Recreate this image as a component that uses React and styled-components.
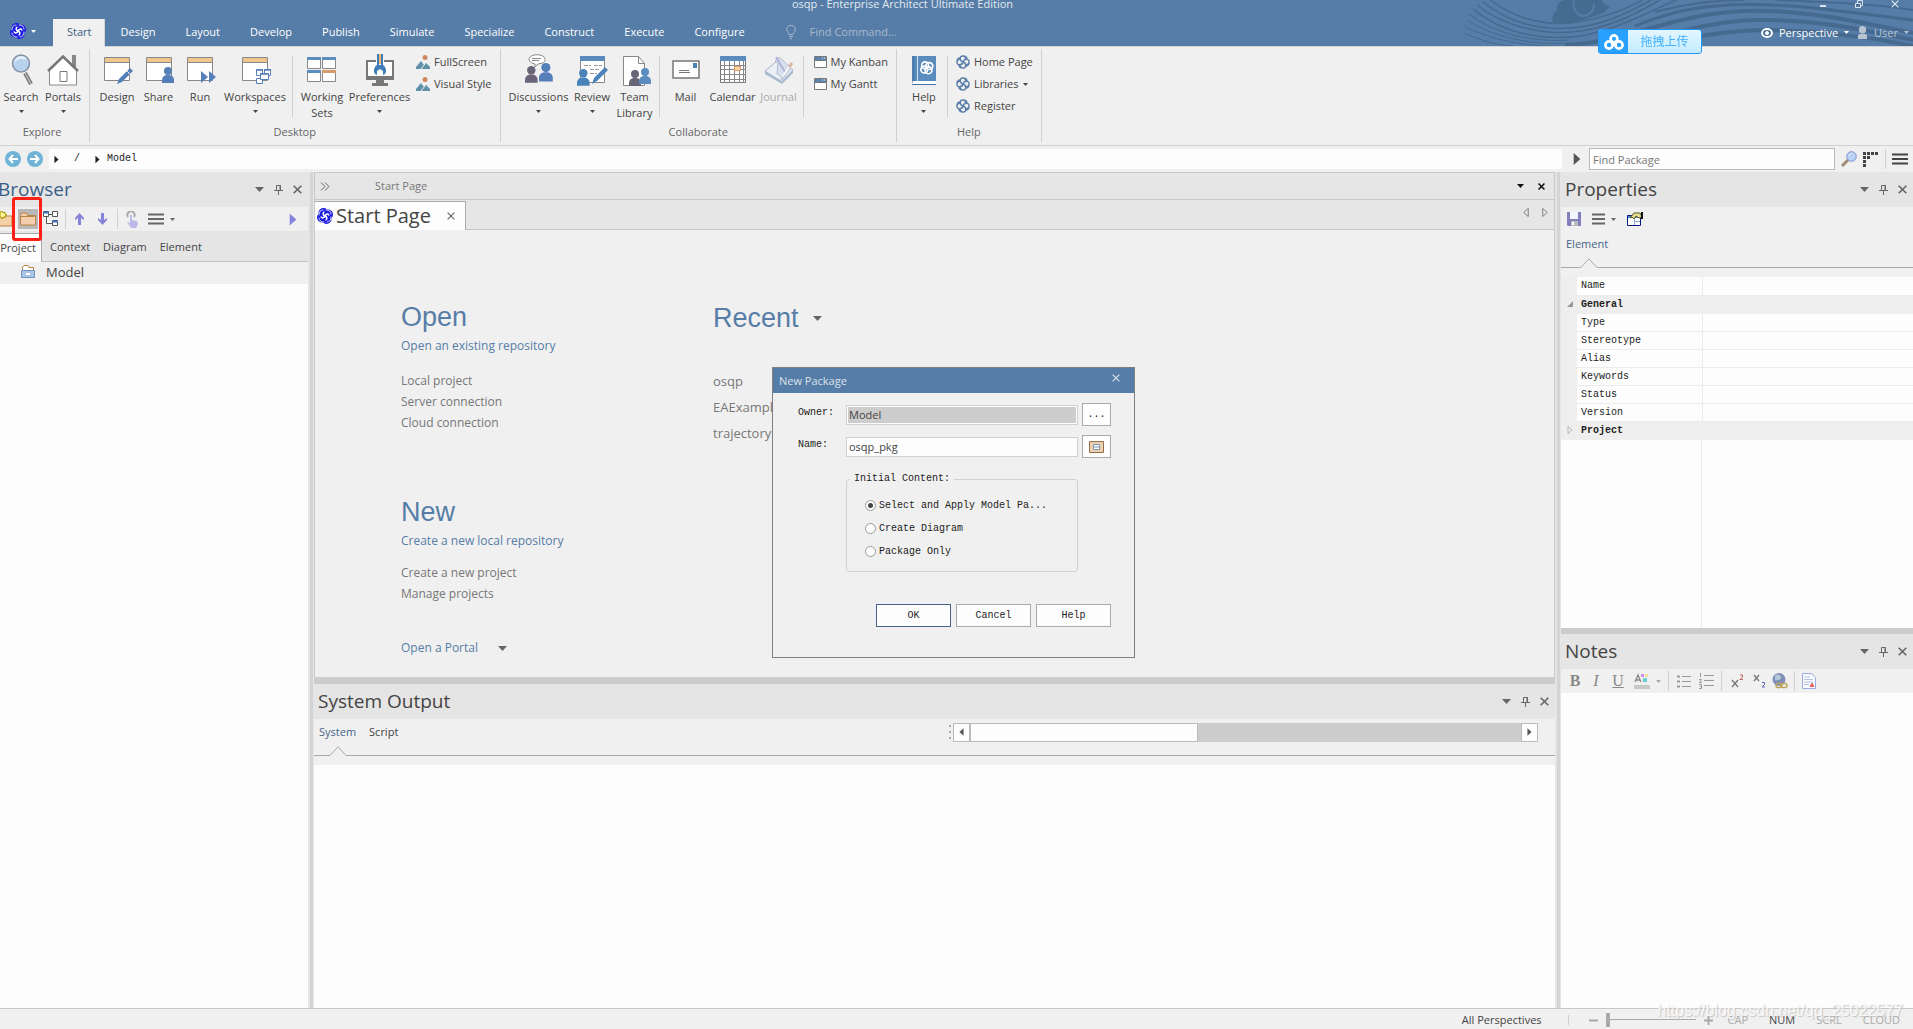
import React, { useState } from 'react';
import styled, { createGlobalStyle, css } from 'styled-components';

const UI = '"Open Sans", "Noto Sans CJK SC", sans-serif';
const MONO = '"Liberation Mono", "Noto Sans CJK SC", monospace';
const BLUE = '#567da7';

const GlobalStyle = createGlobalStyle`
    * { box-sizing: border-box; }
    body {
        margin: 0;
        font: 11px/16px ${UI};
        color: #444;
        background: #e5e5e5;
        overflow: hidden;
    }
    button, input { font: inherit; color: inherit; }
    button { background: none; border: 0; padding: 0; margin: 0; }
    a { color: inherit; text-decoration: none; }
    svg { display: block; flex: none; }
`;

/* ---------- icons ---------- */

const Caret = ({ color = '#444', size = 5 }) => (
    <svg width={size * 2 - 1} height={size} viewBox="0 0 9 5" aria-hidden="true"><path d="M0 0h9L4.5 5z" fill={color} /></svg>
);

const Arrow = ({ color = '#222', left, w = 5, h = 9, outline }) => (
    <svg width={w} height={h} viewBox="0 0 6 10" aria-hidden="true">
        <path d={left ? 'M5.500 .5v9L.5 5z' : 'M.5 .5v9L5.500 5z'} fill={outline ? 'none' : color} stroke={color} strokeWidth={outline ? 1 : 0} />
    </svg>
);

const Cross = ({ color = '#666', size = 9, w = 1.6 }) => (
    <svg width={size} height={size} viewBox="0 0 9 9" aria-hidden="true"><path d="M.7.7l7.600 7.600M8.300.7L.7 8.300" stroke={color} strokeWidth={w} /></svg>
);

const Pin = () => (
    <svg width="9" height="11" viewBox="0 0 9 11" fill="none" stroke="#666" aria-hidden="true">
        <path d="M2.500 6V1.500h4V6M0 6.500h9M4.500 7v4" /><path d="M6 1v5" />
    </svg>
);

const Menu = ({ w = 16, color = '#666' }) => (
    <svg width={w} height="12" viewBox="0 0 16 12" preserveAspectRatio="none" aria-hidden="true"><path d="M0 1.500h16M0 6h16M0 10.500h16" stroke={color} strokeWidth="2" /></svg>
);

const Knot = ({ size = 14, color = '#5d80aa' }) => (
    <svg width={size} height={size} viewBox="0 0 16 16" fill="none" stroke={color} strokeWidth="1.700" aria-hidden="true">
        <path d="M8 8C4 7 3.800 1.200 7.500 1.100 10 1 11.300 2.700 11 4.300M8 8c1-4 6.800-4.200 6.900-.5.1 2.500-1.600 3.800-3.200 3.500M8 8c4 1 4.200 6.800.5 6.900C6 15 4.700 13.300 5 11.700M8 8c-1 4-6.800 4.200-6.900.5C1 6 2.700 4.700 4.300 5" />
        <path d="M4.500 3.500C3 3.500 1.500 5 1.300 7M12.500 4.500C12.500 3 11 1.500 9 1.300M11.500 12.500c1.500 0 3-1.500 3.200-3.500M3.500 11.500c0 1.500 1.500 3 3.500 3.200" />
    </svg>
);

const KnotSolid = ({ size = 16 }) => (
    <svg width={size} height={size} viewBox="0 0 16 16" aria-hidden="true">
        <g fill="#1a1ae0"><circle cx="6.500" cy="5" r="5" /><circle cx="11" cy="6.500" r="5" /><circle cx="9.500" cy="11" r="5" /><circle cx="5" cy="9.500" r="5" /></g>
        <g fill="none" stroke="#fff" strokeLinecap="round">
            <path d="M8 8C6 7.500 5.500 5 7 4.200M8 8c.5-2 3-2.500 3.800-1M8 8c2 .5 2.500 3 1 3.800M8 8c-.5 2-3 2.500-3.800 1" strokeWidth="1.500" />
            <path d="M2 7c-.3-3 1.500-5 4-5M9 2c3-.3 5 1.500 5 4M14 9c.3 3-1.500 5-4 5M7 14c-3 .3-5-1.500-5-4" strokeWidth=".8" />
        </g>
    </svg>
);

const Win = ({ children }) => (
    <g>
        <path d="M3.500 3.500h25v23h-25z" fill="#fff" stroke="#888" />
        <path d="M4 4h24v4H4z" fill="#efc78d" /><path d="M4 8.500h24" stroke="#888" />
        {children}
    </g>
);

const Person = ({ x, y, color, s = 1 }) => (
    <g transform={`translate(${x} ${y}) scale(${s})`} fill={color}>
        <circle cx="6" cy="4" r="4" /><path d="M0 16v-3c0-3 2-4.500 4.500-5h3c2.500.5 4.500 2 4.500 5v3z" />
    </g>
);

const bigIcons = {
    search: (
        <>
            <path d="M20 19l6 11" stroke="#777" strokeWidth="4" /><path d="M20 19l6 11" stroke="#bbb" strokeWidth="1.500" />
            <circle cx="16" cy="9.500" r="8.500" fill="#b7d0ec" stroke="#8592a3" strokeWidth="1.500" />
            <path d="M9.500 11c1-6 7-7 12.500-5-1-3-4-4-6-4-4 0-7 4-6.500 9z" fill="#e4effb" />
        </>
    ),
    portals: (
        <>
            <path d="M25 1h4v14l-4-4z" fill="#888" />
            <path d="M2.500 16.500L16 3l13.500 13.500V31h-27z" fill="#fff" stroke="#888" />
            <path d="M1 17L16 2.500 31 17" fill="none" stroke="#777" strokeWidth="2.500" />
            <path d="M13 17.500h7v10h-7z" fill="#fff" stroke="#777" />
        </>
    ),
    design: <Win><path d="M29 14l3 3-11 11-5 2 2-5z" fill="#557fb9" /><path d="M26 17l3 3" stroke="#fff" /></Win>,
    share: <Win><Person x={19} y={13} color="#557fb9" /></Win>,
    run: <Win><path d="M17 17v12l7-6zM25 17v12l7-6z" fill="#557fb9" /></Win>,
    workspaces: (
        <Win>
            <g fill="#fff" stroke="#557fb9"><path d="M17.500 15.500h6v6h-6zM25.500 15.500h6v6h-6zM17.500 24.500h6v5h-6z" /><path d="M21.500 19.500h8v6h-8z" /></g>
            <path d="M17 16h7M25 16h7M21 20h9" stroke="#557fb9" strokeWidth="1.500" />
        </Win>
    ),
    sets: (
        <>
            <g fill="#fff" stroke="#888"><path d="M1.500 3.500h13v11h-13zM16.500 3.500h13v11h-13zM1.500 16.500h13v11h-13zM16.500 16.500h13v11h-13z" /></g>
            <path d="M1 4.500h14M16 4.500h14M1 17.500h14" stroke="#5a8cbd" strokeWidth="3" /><path d="M16 17.500h14" stroke="#d59a6b" strokeWidth="3" />
        </>
    ),
    preferences: (
        <>
            <path d="M3 7h26v17H3z" fill="#fff" stroke="#777" strokeWidth="2" /><path d="M2 22h28v4H2z" fill="#777" />
            <path d="M12 26h8v3h4v3H8v-3h4z" fill="#777" />
            <path d="M12 6h8v6H12z" fill="#fff" /><path d="M13 0h2v12h-2zM17 0h2v12h-2z" fill="#3f7cb8" /><path d="M15 0h2v10h-2z" fill="#efb66c" />
            <path d="M13 11h6c3 2 4 6 2 9l-2 1v-4l-3-2-3 2v4l-2-1c-2-3-1-7 2-9z" fill="#3f7cb8" />
        </>
    ),
    discussions: (
        <>
            <path d="M7 3c3-3 11-3 14 0 2 2 1 5-1 6l-5 1-3 3v-3C6 9 5 5 7 3z" fill="#fff" stroke="#888" />
            <path d="M9 4.500h9M9 6.500h7" stroke="#888" />
            <Person x={2} y={12} color="#6a6478" s={1.050} /><Person x={16} y={9} color="#557fb9" s={1.150} />
        </>
    ),
    review: (
        <>
            <path d="M4.500 2.500h24v26h-24z" fill="#fff" stroke="#888" /><path d="M4 2h25v5H4z" fill="#5a8cbd" />
            <path d="M8 11.500h7M18 11.500h8M14 15.500h10M14 19.500h7" stroke="#999" strokeDasharray="4 1" />
            <path d="M29 13l3 3-11 11-5 3 2-6z" fill="#4a82ba" />
            <Person x={1} y={15} color="#4a82ba" s={1.050} />
        </>
    ),
    team: (
        <>
            <path d="M4.500 2.500h15l6 7v22h-21z" fill="#fff" stroke="#888" /><path d="M19.500 2.500v7h6" fill="none" stroke="#888" />
            <Person x={10} y={16} color="#6a6478" /><Person x={20} y={14} color="#5a8cbd" s={1} />
        </>
    ),
    mail: (
        <>
            <path d="M3 7h26v17H3z" fill="#fff" stroke="#777" strokeWidth="1.500" /><path d="M23 9h4v5h-4z" fill="#4a82ba" />
            <path d="M9 16.500h10M9 18.500h11" stroke="#777" />
        </>
    ),
    calendar: (
        <>
            <path d="M3.500 2.500h25v26h-25z" fill="#fff" stroke="#777" /><path d="M3 2h26v5H3z" fill="#5a8cbd" />
            <path d="M7.500 7v22M12.500 7v22M17.500 7v22M22.500 7v22M26.500 7v22M3 11.500h26M3 15.500h26M3 20.500h26M3 25.500h26" stroke="#888" />
            <path d="M17.500 12.500h6v4h-6z" fill="#fcd7a5" stroke="#e39a6b" />
        </>
    ),
    journal: (
        <g opacity=".75">
            <path d="M2 17l12-10 16 9-11 12z" fill="#e8f0f9" stroke="#8d9fb8" /><path d="M2 17v3l17 10 11-11v-3L19 27z" fill="#94a9c6" />
            <path d="M15 9l-3-2 4-4 12 11-9 12c0-3-2-5-5-6z" fill="#d0dcec" stroke="#9aaac0" /><path d="M13 3l9 15" stroke="#9aa0d0" strokeWidth="2" /><path d="M28 10l-8 12" stroke="#f7fafd" strokeWidth="2" /><path d="M29 9l-3 4" stroke="#d9a08a" strokeWidth="3" />
        </g>
    ),
    help: (
        <>
            <path d="M4 2h24v25H4z" fill="#5a8cbd" /><path d="M5.500 2v27" stroke="#4878a8" strokeWidth="2" /><path d="M9.500 2v25" stroke="#cfe0f0" />
            <path d="M5 27h23v2.500H5z" fill="#fff" /><path d="M4 30.500h24" stroke="#4878a8" />
            <g transform="translate(12 7) scale(.85)" fill="none" stroke="#fff" strokeWidth="2"><circle cx="6" cy="5" r="4" /><circle cx="11" cy="6" r="4" /><circle cx="10" cy="11" r="4" /><circle cx="5" cy="10" r="4" /></g>
        </>
    ),
};

const BigIcon = ({ name }) => <svg width="32" height="32" viewBox="0 0 32 32" aria-hidden="true">{bigIcons[name]}</svg>;

const smallIcons = {
    style: (
        <svg width="14" height="14" viewBox="0 0 14 14"><circle cx="9" cy="2.500" r="2.500" fill="#d1875f" /><path d="M0 14V12l5-6 3 4 2-2 4 4v2z" fill="#6191a8" /><path d="M5 14l4-5" stroke="#f0f0f0" /></svg>
    ),
    window: (
        <svg width="13" height="12" viewBox="0 0 13 12"><path d="M.5.5h12v11H.5z" fill="#fff" stroke="#777" /><path d="M1 1h11v3H1z" fill="#5a83ad" /><path d="M8 2h1M10 2h1" stroke="#fff" /><path d="M1 4.500h11" stroke="#777" /></svg>
    ),
    knot: <Knot size={14} />,
};

const Swirl = () => (
    <svg width="448" height="46" viewBox="0 0 448 46" fill="none" stroke="#45698f" aria-hidden="true">
        <g strokeWidth="1.500">
            <path d="M25 0c30 22 60 25 80 23s50-10 72-23" /><path d="M18 2c30 24 62 28 88 26 30-2 55-14 80-28" />
            <path d="M12 5c30 24 68 29 95 27 35-3 62-17 88-32" /><path d="M8 9c32 26 70 30 98 28 38-3 75-24 105-37" />
            <path d="M4 14c32 24 72 28 100 26M2 20c34 22 76 25 104 23M0 27c30 14 60 19 90 19M0 33c16 8 32 12 48 13" strokeWidth="1" />
        </g>
        <g strokeWidth="4">
            <path d="M100 45c60-2 110-32 180-34 60-2 120 12 168 22" /><path d="M150 46c50-8 90-25 140-26 60-1 110 10 158 20" />
            <path d="M190 45c40-9 70-14 110-15 50 0 100 6 148 16" /><path d="M170 26c30-12 50-17 80-20 70-6 140 8 198 14" strokeWidth="3" />
            <path d="M190 12c30-8 60-12 90-12M310 0c50 2 100 4 138 10" strokeWidth="2" />
        </g>
        <path d="M88 22c-1-6 0-10 4-11-1-6 2-10 7-11h38c1 6 6 5 8 7l-7 6-20 7-16 3z" fill="#45698f" stroke="none" opacity=".9" />
        <path d="M109 0c-2 8 2 14 8 16 8 0 12-6 12-12" stroke="#567da7" strokeWidth="2" />
    </svg>
);

/* ---------- shell ---------- */

const Shell = styled.div`
    display: flex;
    flex-direction: column;
    height: 100vh;
`;

const Header = styled.header`
    position: relative;
    background: ${BLUE};
    color: #fff;
    flex: none;
`;

const Decoration = styled.div`
    position: absolute;
    top: 0;
    right: 0;
`;

const TitleRow = styled.div`
    position: relative;
    display: flex;
    height: 19px;
`;

const WindowTitle = styled.div`
    flex: 1;
    text-align: center;
    line-height: 8px;
    color: #e3eaf1;
`;

const WindowButton = styled.button`
    width: 36px;
    height: 8px;
    display: grid;
    place-items: center;
`;

const TabRow = styled.nav`
    position: relative;
    display: flex;
    align-items: stretch;
    height: 28px;
    border-bottom: 1px solid #d4d4d4;
`;

const AppMenu = styled.button`
    display: flex;
    align-items: center;
    gap: 5px;
    width: 53px;
    padding-left: 10px;
    padding-bottom: 3px;
`;

const RibbonTab = styled.button`
    padding: 0 15px 2px;
    ${p => p.$active && css`
        padding: 0 13px 3px 14px;
        background: #f0f0f0;
        color: #3f5f86;
        margin-bottom: -1px;
        border-right: 1px solid #d4d4d4;
    `}
`;

const FindCommand = styled.label`
    display: flex;
    align-items: center;
    gap: 14px;
    margin-left: 26px;
    padding-bottom: 2px;
    flex: 1;
    input {
        width: 140px;
        border: 0;
        padding: 0;
        background: none;
        outline: none;
        &::placeholder { color: #a9b9ca; opacity: 1; }
    }
`;

const UserArea = styled.div`
    display: flex;
    align-items: center;
    gap: 8px;
    padding-right: 4px;
`;

const UserButton = styled.button`
    display: flex;
    align-items: center;
    gap: 6px;
    color: ${p => (p.$dim ? '#b9c4d1' : '#fff')};
`;

const Uploader = styled.button`
    position: absolute;
    z-index: 2;
    top: 29px;
    right: 211px;
    display: flex;
    width: 104px;
    height: 25px;
    border: 1px solid #2196ff;
    border-radius: 3px;
    overflow: hidden;
    background: linear-gradient(#e3f6ff, #c3ecff);
    color: #41b0ff;
    font: 12px/23px ${UI};
    span { flex: 1; }
    i { display: grid; place-items: center; width: 29px; height: 23px; background: #27a0ff; }
`;

/* ---------- ribbon ---------- */

const Ribbon = styled.div`
    display: flex;
    flex: none;
    padding-top: 2px;
    background: #f0f0f0;
    border-bottom: 1px solid #d0d0d0;
`;

const Group = styled.section`
    display: flex;
    flex-direction: column;
    height: 93px;
    margin-bottom: 3px;
    border-right: 1px solid #d0d0d0;
`;

const GroupBody = styled.div`
    display: flex;
    flex: 1;
    padding: 0 ${p => p.$end || 0}px 0 ${p => p.$start || 0}px;
`;

const GroupName = styled.div`
    text-align: center;
    color: #666;
    height: 18px;
    padding-right: ${p => p.$end || 0}px;
`;

const BigButton = styled.button`
    display: flex;
    flex-direction: column;
    align-items: center;
    width: ${p => p.$w}px;
    padding-top: 5px;
    color: ${p => (p.disabled ? '#aaa' : '#444')};
    white-space: nowrap;
    line-height: 16px;
    svg + span { margin-top: 3px; }
    span + svg { margin-top: 5px; }
`;

const Separator = styled.i`
    width: 1px;
    height: ${p => p.$h || 61}px;
    margin: ${p => p.$m || '7px 4px 0 3px'};
    background: #d0d0d0;
    flex: none;
`;

const SmallColumn = styled.div`
    padding: 2px 8px 0 ${p => p.$start || 4}px;
`;

const SmallButton = styled.button`
    display: flex;
    align-items: center;
    gap: 4px;
    height: 22px;
    white-space: nowrap;
`;

/* ---------- address bar ---------- */

const AddressBar = styled.div`
    display: flex;
    align-items: center;
    height: 26px;
    flex: none;
    padding-left: 5px;
    background: #f0f0f0;
`;

const RoundButton = styled.button`
    width: 16px;
    height: 16px;
    margin-right: 6px;
    border-radius: 50%;
    background: #6fb4d6;
    display: grid;
    place-items: center;
`;

const Crumbs = styled.div`
    display: flex;
    align-items: center;
    flex: 1;
    height: 20px;
    padding-left: 5px;
    background: #fdfdfd;
    font: 10px/20px ${MONO};
    color: #222;
    span { padding: 0 15px; }
    a { padding-left: 7px; }
`;

const PackageSearch = styled.div`
    display: flex;
    align-items: center;
    gap: 6px;
    width: 351px;
    padding: 0 5px 0 11px;
    input {
        flex: 1;
        min-width: 0;
        height: 22px;
        margin: 0 0 0 2px;
        padding: 0 3px;
        border: 1px solid #bbb;
        background: #fdfdfd;
        outline: none;
        &::placeholder { color: #777; opacity: 1; }
    }
`;

/* ---------- panels ---------- */

const Workspace = styled.main`
    display: flex;
    flex: 1;
    min-height: 0;
`;

const Splitter = styled.div`
    width: 6px;
    padding: 0 1px 0 2px;
    background: #e5e5e5;
    &::before { content: ''; display: block; height: 100%; background: #d4d4d4; }
`;

const BrowserPanel = styled.aside`
    display: flex;
    flex-direction: column;
    width: 308px;
    background: #fdfdfd;
    overflow: hidden;
`;

const CenterColumn = styled.div`
    display: grid;
    grid-template-rows: 505fr 7px 324fr;
    flex: 1;
    min-width: 0;
`;

const SideColumn = styled.aside`
    display: grid;
    grid-template-rows: 456fr 6px 374fr;
    width: 352px;
`;

const Divider = styled.div`
    background: #ccc;
`;

const Panel = styled.section`
    display: flex;
    flex-direction: column;
    min-height: 0;
    background: #fdfdfd;
    border: solid #c8c8c8;
    border-width: ${p => (p.$framed ? '1px 1px 0 1px' : 0)};
`;

const PanelHead = styled.div`
    display: flex;
    align-items: center;
    height: 35px;
    flex: none;
    padding: 0 6px 0 4px;
    background: #e5e5e5;
    h2 {
        flex: 1;
        margin: 0;
        padding-bottom: 2px;
        font: 19px/32px ${UI};
        color: #444;
    }
`;

const BrowserHead = styled(PanelHead)`
    padding-left: 0;
    h2 { margin-left: -2px; color: #3b5e88; }
`;

const HeadButton = styled.button`
    display: grid;
    place-items: center;
    width: 19px;
    height: 19px;
    &:last-child { width: 9px; margin-left: 5px; }
`;

const Toolbar = styled.div`
    position: relative;
    display: flex;
    align-items: center;
    height: 24px;
    flex: none;
    padding-left: ${p => p.$start || 0}px;
    gap: ${p => p.$gap || 0}px;
    background: #f0f0f0;
`;

const ToolButton = styled.button`
    display: flex;
    align-items: center;
    justify-content: center;
    gap: 6px;
    width: ${p => p.$w}px;
    height: 20px;
    color: #888;
    background: ${p => (p.$pressed ? '#b8b8b8' : 'none')};
`;

const LetterButton = styled(ToolButton)`
    font: ${p => (p.$bold ? 'bold ' : '')}16px/20px "Liberation Serif", serif;
    font-style: ${p => (p.$italic ? 'italic' : 'normal')};
    text-decoration: ${p => (p.$underline ? 'underline' : 'none')};
`;

const Highlight = styled.div`
    position: absolute;
    left: 12px;
    top: -10px;
    width: 30px;
    height: 44px;
    border: 3px solid #ff2015;
    border-radius: 3px;
    pointer-events: none;
`;

const Spacer = styled.span`
    flex: 1;
`;

const BrowserTabs = styled.div`
    display: flex;
    height: 31px;
    flex: none;
    padding-top: 2px;
    background: #e5e5e5;
    border-bottom: 1px solid #c4c4c4;
`;

const BrowserTab = styled.button`
    padding: 0 7px 1px 6px;
    ${p => p.$active && css`
        display: flex;
        align-items: center;
        justify-content: flex-end;
        width: 42px;
        flex: none;
        padding: 0 5px 0 0;
        margin-right: 2px;
        margin-bottom: -1px;
        background: #fdfdfd;
        border: solid #aaa;
        border-width: 1px 1px 0 0;
    `}
`;

const TreeRow = styled.div`
    display: flex;
    align-items: center;
    gap: 11px;
    height: 22px;
    padding: 0 0 2px 21px;
    background: #f0f0f0;
    font-size: 13px;
`;

const DocBar = styled.div`
    display: flex;
    align-items: center;
    flex: none;
    height: 27px;
    padding: 0 8px 0 5px;
    border-bottom: 1px solid #c8c8c8;
    background: #e6e6e6;
    color: #777;
    span { margin-left: 45px; }
    button:last-child { margin-left: 7px; }
`;

const DocTabs = styled.div`
    display: flex;
    flex: none;
    height: 30px;
    background: #e6e6e6;
    border-bottom: 1px solid #c8c8c8;
    padding: 3px 5px 0 0;
`;

const DocTab = styled.div`
    display: flex;
    align-items: center;
    width: 151px;
    margin: -2px 0 -1px;
    padding-left: 2px;
    background: #fdfdfd;
    border: solid #aaa;
    border-width: 1px 1px 0 0;
    font-size: 20px;
    line-height: 28px;
    span { flex: 1; margin-left: 3px; white-space: nowrap; }
    button { margin-right: 10px; }
`;

const StartPage = styled.div`
    display: flex;
    flex: 1;
    padding: 71px 0 0 86px;
    background: #f0f0f0;
    overflow: hidden;
`;

const StartColumn = styled.div`
    width: ${p => p.$w}px;
    padding-top: ${p => p.$top || 0}px;
`;

const StartBlock = styled.section`
    margin-bottom: ${p => p.$after}px;
`;

const StartTitle = styled.h1`
    display: flex;
    align-items: center;
    gap: 14px;
    margin: 0;
    font: 27px/32px "Liberation Sans", sans-serif;
    color: ${BLUE};
`;

const StartLink = styled.a`
    display: flex;
    align-items: center;
    gap: 20px;
    width: fit-content;
    margin: ${p => p.$m || 0};
    color: ${BLUE};
    font-size: 12px;
    line-height: 20px;
`;

const StartList = styled.ul`
    list-style: none;
    margin: ${p => p.$gap}px 0 0;
    padding: 0;
    color: #777;
    font-size: ${p => p.$size || 12}px;
    line-height: ${p => p.$line || 21}px;
`;

const PanelTabs = styled.div`
    display: flex;
    align-items: center;
    gap: 13px;
    height: 26px;
    flex: none;
    padding: 0 17px 0 5px;
    background: #f0f0f0;
`;

const PanelTab = styled.button`
    color: ${p => (p.$active ? '#46648a' : '#444')};
`;

const RuleRow = styled.div`
    display: flex;
    align-items: flex-end;
    flex: none;
    height: 20px;
    background: #f0f0f0;
    border-bottom: 9px solid #f0f0f0;
    i { height: 1px; background: #aaa; width: ${p => p.$start}px; }
    b { height: 1px; background: #aaa; flex: 1; }
`;

const TabRule = ({ start }) => (
    <RuleRow $start={start}>
        <i />
        <svg width="16" height="10" viewBox="0 0 16 10" aria-hidden="true"><path d="M0 9.500L8 .8l8 8.700" fill="none" stroke="#aaa" /></svg>
        <b />
    </RuleRow>
);

const Scroller = styled.div`
    display: flex;
    flex: 0 1 589px;
    align-items: center;
    gap: 2px;
`;

const Grip = styled.i`
    width: 2px;
    height: 14px;
    border-top: 2px solid #aaa;
    border-bottom: 2px solid #aaa;
    background: linear-gradient(transparent 4px, #aaa 4px, #aaa 6px, transparent 6px);
`;

const ScrollTrack = styled.div`
    display: flex;
    flex: 1;
    height: 19px;
    background: #cdcdcd;
`;

const ScrollButton = styled.button`
    display: grid;
    place-items: center;
    width: 17px;
    background: #fdfdfd;
    border: 1px solid #bbb;
`;

const ScrollThumb = styled.div`
    width: 39%;
    background: #fdfdfd;
    border: 1px solid #bbb;
`;

const PropertyArea = styled.div`
    flex: 1;
    background: linear-gradient(90deg, transparent 140px, #ebebeb 140px, #ebebeb 141px, transparent 141px);
`;

const PropertyTable = styled.table`
    width: 100%;
    table-layout: fixed;
    border-collapse: collapse;
    font: 10px/17px ${MONO};
    td, th { padding: 0; height: 18px; border-bottom: 1px solid #ececec; background: #fdfdfd; }
    th { text-align: left; font-weight: normal; padding-left: 4px; width: 125px; border-right: 1px solid #ebebeb; color: #222; }
    td:first-child { width: 16px; background: #eee; border-color: #eee; padding-left: 6px; }
`;

const CategoryRow = styled.tr`
    && th { font-weight: bold; background: #eee; border-color: #eee; }
    && td { background: #eee; border-color: #eee; }
`;

/* ---------- status bar ---------- */

const StatusBar = styled.footer`
    position: relative;
    display: flex;
    align-items: center;
    justify-content: flex-end;
    flex: none;
    height: 21px;
    padding: 2px 13px 0 0;
    border-top: 1px solid #c8c8c8;
    background: #f0f0f0;
`;

const ZoomControl = styled.label`
    display: flex;
    align-items: center;
    gap: 8px;
    margin: 0 14px 0 20px;
    input {
        appearance: none;
        width: 90px;
        height: 14px;
        margin: 0;
        background: linear-gradient(transparent 6px, #aaa 6px, #aaa 7px, transparent 7px);
        &::-webkit-slider-thumb { appearance: none; width: 4px; height: 14px; background: #aaa; }
    }
`;

const KeyState = styled.span`
    margin-left: ${p => p.$gap || 21}px;
    color: ${p => (p.$on ? '#444' : '#aaa')};
`;

const Watermark = styled.div`
    position: absolute;
    right: 10px;
    bottom: 9px;
    color: #fafafa;
    font: 16px/18px "Liberation Sans", sans-serif;
    text-shadow: 1px 1px 1px #bbb;
    opacity: .85;
    pointer-events: none;
`;

/* ---------- dialog ---------- */

const Overlay = styled.div`
    position: fixed;
    inset: 0;
    display: flex;
    align-items: center;
    justify-content: center;
    padding: 0 6px 4px 0;
    pointer-events: none;
`;

const Dialog = styled.form`
    width: 363px;
    padding-bottom: 30px;
    border: 1px solid #808080;
    background: #f0f0f0;
    font: 10px/12px ${MONO};
    color: #222;
    pointer-events: auto;
`;

const DialogHead = styled.div`
    display: flex;
    justify-content: space-between;
    height: 25px;
    padding: 0 14px 0 6px;
    background: ${BLUE};
    color: #dbe2ea;
    font: 11px/25px ${UI};
    button { height: 20px; }
`;

const DialogBody = styled.div`
    padding: 10px 23px 0 25px;
`;

const Field = styled.div`
    display: flex;
    align-items: center;
    height: 23px;
    margin-bottom: 9px;
    label { width: 48px; height: 15px; }
    input {
        flex: 1;
        min-width: 0;
        height: 20px;
        margin-right: 4px;
        padding: 0 2px;
        border: 1px solid #d0d0d0;
        background: #fdfdfd;
        font: 11px/16px ${UI};
        color: #444;
        outline: none;
        &:read-only { background: #cdcdcd; box-shadow: inset 0 0 0 1px #fdfdfd; }
    }
`;

const SquareButton = styled.button`
    display: grid;
    place-items: center;
    width: 29px;
    height: 23px;
    border: 1px solid #aaa;
    background: #fdfdfd;
`;

const Options = styled.fieldset`
    margin: 15px 33px 0 48px;
    padding: 9px 3px 8px;
    border: 1px solid #d0d0d0;
    border-radius: 3px;
    legend { padding: 0 4px; }
`;

const Option = styled.label`
    display: flex;
    align-items: center;
    gap: 3px;
    height: 23px;
    padding-left: 15px;
    white-space: nowrap;
    input {
        appearance: none;
        display: grid;
        place-items: center;
        width: 11px;
        height: 11px;
        margin: 0;
        border: 1px solid #999;
        border-radius: 50%;
        background: #fdfdfd;
        &:checked::before { content: ''; width: 5px; height: 5px; border-radius: 50%; background: #444; }
    }
`;

const Actions = styled.div`
    display: flex;
    justify-content: flex-end;
    gap: 5px;
    margin-top: 32px;
`;

const ActionButton = styled.button`
    width: 75px;
    height: 23px;
    border: 1px solid ${p => (p.$primary ? '#46648a' : '#aaa')};
    background: #fdfdfd;
`;

const TABS = ['Start', 'Design', 'Layout', 'Develop', 'Publish', 'Simulate', 'Specialize', 'Construct', 'Execute', 'Configure'];
const PROPERTIES = ['Type', 'Stereotype', 'Alias', 'Keywords', 'Status', 'Version'];
const CONTENT = ['Select and Apply Model Pa...', 'Create Diagram', 'Package Only'];

const Big = ({ icon, label, second, caret, w, disabled }) => (
    <BigButton $w={w} disabled={disabled}>
        <BigIcon name={icon} />
        <span>{label}{second && <><br />{second}</>}</span>
        {caret && <Caret size={3} />}
    </BigButton>
);

const Small = ({ icon, label, caret }) => (
    <SmallButton>{smallIcons[icon]}{label}{caret && <Caret size={3} />}</SmallButton>
);

const HeadButtons = () => (
    <>
        <HeadButton aria-label="Options"><Caret color="#666" /></HeadButton>
        <HeadButton aria-label="Auto hide"><Pin /></HeadButton>
        <HeadButton aria-label="Close"><Cross /></HeadButton>
    </>
);

const TopBar = ({ tab, setTab }) => (
    <Header>
        <Decoration><Swirl /></Decoration>
        <TitleRow>
            <WindowTitle>osqp - Enterprise Architect Ultimate Edition</WindowTitle>
            <WindowButton aria-label="Minimize"><svg width="6" height="6"><path d="M0 5h6" stroke="#dde4ec" strokeWidth="2" /></svg></WindowButton>
            <WindowButton aria-label="Restore"><svg width="8" height="8" fill="none" stroke="#dde4ec"><path d="M.5 3.500h5v4h-5zM2.500 3V.5h5v5H6" /></svg></WindowButton>
            <WindowButton aria-label="Close window"><Cross color="#dde4ec" size={8} w={1.300} /></WindowButton>
        </TitleRow>
        <TabRow>
            <AppMenu aria-label="Application menu"><KnotSolid /><Caret color="#fff" size={3} /></AppMenu>
            {TABS.map(t => <RibbonTab key={t} $active={t === tab} onClick={() => setTab(t)}>{t}</RibbonTab>)}
            <FindCommand>
                <svg width="10" height="14" viewBox="0 0 10 14" fill="none" stroke="#a9b9ca" aria-hidden="true"><path d="M3 9.500C3 8 .8 7 .8 4.500a4.200 4 0 018.400 0C9.200 7 7 8 7 9.500zM3 11.500h4M4 13.500h2" /></svg>
                <input aria-label="Find Command" placeholder="Find Command..." />
            </FindCommand>
            <UserArea>
                <UserButton>
                    <svg width="12" height="10" viewBox="0 0 12 10" fill="none" stroke="#fff" aria-hidden="true"><ellipse cx="6" cy="5" rx="5" ry="4" strokeWidth="1.800" /><circle cx="6" cy="5" r="1.500" fill="#fff" /></svg>
                    Perspective <Caret color="#fff" size={3} />
                </UserButton>
                <UserButton $dim>
                    <svg width="11" height="13" viewBox="0 0 12 14" fill="#b9c4d1" aria-hidden="true"><circle cx="6" cy="4" r="4" /><path d="M1 14v-4c1-2 9-2 10 0v4z" /></svg>
                    User <Caret color="#b9c4d1" size={3} />
                </UserButton>
            </UserArea>
        </TabRow>
        <Uploader>
            <i><svg width="20" height="16" viewBox="0 0 20 16" fill="none" stroke="#fff" strokeWidth="2.600" aria-hidden="true"><circle cx="10" cy="4.800" r="3.400" /><circle cx="5" cy="11" r="3.600" /><circle cx="15" cy="11" r="3.600" /><path d="M7.500 8.500l5 4" /></svg></i>
            <span>拖拽上传</span>
        </Uploader>
    </Header>
);

const RibbonBar = () => (
    <Ribbon>
        <Group>
            <GroupBody $end={5}>
                <Big icon="search" label="Search" caret w={42} />
                <Big icon="portals" label="Portals" caret w={42} />
            </GroupBody>
            <GroupName $end={5}>Explore</GroupName>
        </Group>
        <Group>
            <GroupBody $start={6}>
                <Big icon="design" label="Design" w={42} />
                <Big icon="share" label="Share" w={41} />
                <Big icon="run" label="Run" w={42} />
                <Big icon="workspaces" label="Workspaces" caret w={68} />
                <Separator />
                <Big icon="sets" label="Working" second="Sets" w={50} />
                <Big icon="preferences" label="Preferences" caret w={65} />
                <SmallColumn>
                    <Small icon="style" label="FullScreen" />
                    <Small icon="style" label="Visual Style" />
                </SmallColumn>
            </GroupBody>
            <GroupName>Desktop</GroupName>
        </Group>
        <Group>
            <GroupBody $start={6}>
                <Big icon="discussions" label="Discussions" caret w={64} />
                <Big icon="review" label="Review" caret w={43} />
                <Big icon="team" label="Team" second="Library" w={42} />
                <Separator />
                <Big icon="mail" label="Mail" w={44} />
                <Big icon="calendar" label="Calendar" w={50} />
                <Big icon="journal" label="Journal" w={42} disabled />
                <Separator />
                <SmallColumn $start={6}>
                    <Small icon="window" label="My Kanban" />
                    <Small icon="window" label="My Gantt" />
                </SmallColumn>
            </GroupBody>
            <GroupName>Collaborate</GroupName>
        </Group>
        <Group>
            <GroupBody $start={7}>
                <Big icon="help" label="Help" caret w={40} />
                <Separator />
                <SmallColumn>
                    <Small icon="knot" label="Home Page" />
                    <Small icon="knot" label="Libraries" caret />
                    <Small icon="knot" label="Register" />
                </SmallColumn>
            </GroupBody>
            <GroupName>Help</GroupName>
        </Group>
    </Ribbon>
);

const Address = () => (
    <AddressBar>
        <RoundButton aria-label="Back"><svg width="10" height="10" fill="none" stroke="#fff" strokeWidth="2"><path d="M5 1L1.500 5 5 9M2 5h8" /></svg></RoundButton>
        <RoundButton aria-label="Forward"><svg width="10" height="10" fill="none" stroke="#fff" strokeWidth="2"><path d="M5 1l3.500 4L5 9M8 5H0" /></svg></RoundButton>
        <Crumbs><Arrow /><span>/</span><Arrow /><a href="#model">Model</a></Crumbs>
        <PackageSearch>
            <Arrow color="#555" w={8} h={14} />
            <input aria-label="Find Package" placeholder="Find Package" />
            <svg width="16" height="16" viewBox="0 0 16 16" aria-hidden="true"><path d="M7 9l-6 6" stroke="#a08a78" strokeWidth="3" /><circle cx="10.500" cy="5.500" r="4.800" fill="#b9d3f7" stroke="#7d8fc9" /><path d="M8 5c1-2 3-2 4-2" stroke="#fff" /></svg>
            <svg width="16" height="16" viewBox="0 0 16 16" fill="#444" aria-hidden="true"><path d="M0 1h3v3H0zM4 1h3v3H4zM8 1h3v3H8zM12 1h3v3h-3zM0 5h3v3H0zM4 5h3v3H4zM0 9h3v3H0zM0 13h3v3H0z" /></svg>
            <Separator $h={20} $m="0" />
            <Menu color="#444" />
        </PackageSearch>
    </AddressBar>
);

const Browser = () => (
    <BrowserPanel>
        <BrowserHead><h2>Browser</h2><HeadButtons /></BrowserHead>
        <Toolbar>
            <ToolButton $w={18} aria-label="New model"><svg width="18" height="16" viewBox="0 0 18 16"><path d="M0 5h12v10H0" fill="#f5cfa6" stroke="#b98443" /><path d="M2 0l1 2 2-1 0 2 2 1-2 1 0 2-2-1-1 2-1-2-1 0V1z" fill="#fff59c" stroke="#a89700" /></svg></ToolButton>
            <ToolButton $w={20} $pressed aria-label="New package"><svg width="16" height="14" viewBox="0 0 16 14" fill="#f5cfad" stroke="#b98443"><path d="M.5 3.500l1-2.500h5l1 2.500h8v9.500H.5z" /><path d="M.5 4.500h14" /></svg></ToolButton>
            <ToolButton $w={26} aria-label="New diagram"><svg width="16" height="16" viewBox="0 0 16 16" fill="#fff" stroke="#555"><path d="M3.500 6v6.500H9M6 3.500h3" /><path d="M.5.5h5v5h-5zM9.500.5h5v5h-5zM9.500 9.500h5v5h-5z" /><path d="M0 1.500h6M9 10.500h6" stroke="#4472b8" strokeWidth="2" /></svg></ToolButton>
            <Separator $h={20} $m="0 6px 0 1px" />
            <ToolButton $w={14} aria-label="Move up"><svg width="9" height="12" fill="#8583dc"><path d="M4.500 0L9 5v2L6 5v7H3V5L0 7V5z" /></svg></ToolButton>
            <ToolButton $w={32} aria-label="Move down"><svg width="9" height="12" fill="#8583dc"><path d="M4.500 12L9 7V5L6 7V0H3v7L0 5v2z" /></svg></ToolButton>
            <Separator $h={20} $m="0 5px 0 -1px" />
            <ToolButton $w={18} aria-label="Select"><svg width="13" height="17" viewBox="0 0 13 17"><path d="M2 6a3.600 3.600 0 116 0" fill="none" stroke="#aaa" strokeWidth="2" /><path d="M4 4h2v5l5 1 1 3-2 4H5l-4-6 3 1z" fill="#bcb9e8" /></svg></ToolButton>
            <ToolButton $w={40} aria-label="Menu"><Menu /><Caret color="#666" size={3} /></ToolButton>
            <Spacer />
            <ToolButton $w={30} aria-label="Expand"><Arrow color="#8583dc" w={8} h={15} /></ToolButton>
            <Highlight />
        </Toolbar>
        <BrowserTabs>
            <BrowserTab $active>Project</BrowserTab>
            <BrowserTab>Context</BrowserTab>
            <BrowserTab>Diagram</BrowserTab>
            <BrowserTab>Element</BrowserTab>
        </BrowserTabs>
        <TreeRow>
            <svg width="14" height="16" viewBox="0 0 14 16" aria-hidden="true"><path d="M1.500 6V3.500L3 1.500h4l1 2h4.500V6" fill="#fff" stroke="#b98443" /><path d="M.5 6.500h13v7H.5z" fill="#a9c4e4" stroke="#6d96c3" /><path d="M5 10h4" stroke="#fff" strokeWidth="2" /></svg>
            Model
        </TreeRow>
    </BrowserPanel>
);

const Center = () => (
    <CenterColumn>
        <Panel $framed>
            <DocBar>
                <svg width="10" height="9" fill="none" stroke="#666" aria-hidden="true"><path d="M1 .5l4 4-4 4M5 .5l4 4-4 4" /></svg>
                <span>Start Page</span>
                <Spacer />
                <HeadButton aria-label="Documents"><Caret color="#111" size={4} /></HeadButton>
                <HeadButton aria-label="Close document"><Cross color="#111" size={7} w={2} /></HeadButton>
            </DocBar>
            <DocTabs>
                <DocTab><KnotSolid /><span>Start Page</span><button aria-label="Close tab"><Cross size={8} w={1.300} /></button></DocTab>
                <Spacer />
                <HeadButton aria-label="Scroll left"><Arrow left outline color="#777" w={6} h={9} /></HeadButton>
                <HeadButton aria-label="Scroll right"><Arrow outline color="#777" w={6} h={9} /></HeadButton>
            </DocTabs>
            <StartPage>
                <StartColumn $w={312}>
                    <StartBlock $after={63}>
                        <StartTitle>Open</StartTitle>
                        <StartLink href="#open" $m="3px 0 0">Open an existing repository</StartLink>
                        <StartList $gap={14}>
                            <li><a href="#local">Local project</a></li>
                            <li><a href="#server">Server connection</a></li>
                            <li><a href="#cloud">Cloud connection</a></li>
                        </StartList>
                    </StartBlock>
                    <StartBlock $after={34}>
                        <StartTitle>New</StartTitle>
                        <StartLink href="#new" $m="3px 0 0">Create a new local repository</StartLink>
                        <StartList $gap={11}>
                            <li><a href="#project">Create a new project</a></li>
                            <li><a href="#manage">Manage projects</a></li>
                        </StartList>
                    </StartBlock>
                    <StartLink href="#portal">Open a Portal <Caret color="#666" /></StartLink>
                </StartColumn>
                <StartColumn $w={300} $top={1}>
                    <StartTitle>Recent <Caret color="#666" /></StartTitle>
                    <StartList $gap={34} $size={13} $line={26}>
                        <li><a href="#osqp">osqp</a></li>
                        <li><a href="#example">EAExample</a></li>
                        <li><a href="#trajectory">trajectory</a></li>
                    </StartList>
                </StartColumn>
            </StartPage>
        </Panel>
        <Divider />
        <Panel>
            <PanelHead><h2>System Output</h2><HeadButtons /></PanelHead>
            <PanelTabs>
                <PanelTab $active>System</PanelTab>
                <PanelTab>Script</PanelTab>
                <Spacer />
                <Scroller>
                    <Grip />
                    <ScrollTrack>
                        <ScrollButton aria-label="Scroll output left"><Arrow left color="#555" w={5} h={10} /></ScrollButton>
                        <ScrollThumb />
                        <Spacer />
                        <ScrollButton aria-label="Scroll output right"><Arrow color="#555" w={5} h={10} /></ScrollButton>
                    </ScrollTrack>
                </Scroller>
            </PanelTabs>
            <TabRule start={16} />
        </Panel>
    </CenterColumn>
);

const Side = () => (
    <SideColumn>
        <Panel>
            <PanelHead><h2>Properties</h2><HeadButtons /></PanelHead>
            <Toolbar $start={6} $gap={8}>
                <ToolButton $w={14} aria-label="Save"><svg width="14" height="14"><path d="M0 0h14v14H1L0 13z" fill="#8280bd" /><path d="M3 0h8v7H3z" fill="#f4f6ff" /><path d="M4 9h7v5H4z" fill="#bbb" /><path d="M5 10h2v3H5z" fill="#fff" /></svg></ToolButton>
                <ToolButton $w={30} aria-label="View menu"><Menu w={13} /><Caret color="#666" size={3} /></ToolButton>
                <ToolButton $w={16} aria-label="Properties window"><svg width="16" height="14"><path d="M.5 3.500h13v10H.5z" fill="#fff" stroke="#0b1780" /><path d="M1 4h12v2H1z" fill="#4b8be0" /><path d="M7.500 6v7M8 9.500h5" stroke="#8aa9d8" /><path d="M3 6l4-5h6l2 4-3 1-3-2-2 3-2-2z" fill="#e8dd8e" stroke="#5d5820" /><path d="M14 0h2v7h-2z" fill="#111" /></svg></ToolButton>
            </Toolbar>
            <PanelTabs><PanelTab $active>Element</PanelTab></PanelTabs>
            <TabRule start={20} />
            <PropertyArea>
                <PropertyTable>
                    <tbody>
                        <tr><td /><th>Name</th><td /></tr>
                        <CategoryRow><td><svg width="6" height="6"><path d="M6 0v6H0z" fill="#999" /></svg></td><th>General</th><td /></CategoryRow>
                        {PROPERTIES.map(p => <tr key={p}><td /><th>{p}</th><td /></tr>)}
                        <CategoryRow><td><Arrow outline color="#aaa" w={6} h={8} /></td><th>Project</th><td /></CategoryRow>
                    </tbody>
                </PropertyTable>
            </PropertyArea>
        </Panel>
        <Divider />
        <Panel>
            <PanelHead><h2>Notes</h2><HeadButtons /></PanelHead>
            <Toolbar $start={4}>
                <LetterButton $w={20} $bold>B</LetterButton>
                <LetterButton $w={22} $italic>I</LetterButton>
                <LetterButton $w={22} $underline>U</LetterButton>
                <ToolButton $w={36} aria-label="Font colour">
                    <svg width="16" height="16" viewBox="0 0 16 16"><path d="M1 9l3-7 3 7M2 7h4" fill="none" stroke="#888" strokeWidth="1.300" /><path d="M7 1h3v3H7z" fill="#d68ae0" /><path d="M11 1h3v3h-3z" fill="#efe296" /><path d="M9 5h4v4H9z" fill="#6acfd2" /><path d="M0 12h16v4H0z" fill="#c8c8c8" /></svg>
                    <Caret color="#aaa" size={3} />
                </ToolButton>
                <Separator $h={20} $m="0 4px 0 3px" />
                <ToolButton $w={22} aria-label="Bulleted list"><svg width="14" height="14" stroke="#999"><path d="M0 2.500h3M0 7.500h3M0 12.500h3" strokeWidth="2" /><path d="M5 2.500h9M5 7.500h9M5 12.500h9" /></svg></ToolButton>
                <ToolButton $w={22} aria-label="Numbered list"><svg width="15" height="16" fill="none" stroke="#999"><path d="M1.500 0v4M0 6.500h2.500L.5 9.500H3M0 11.500h2.500v4H0M1 13.500h1M5 2.500h10M5 7.500h10M5 12.500h10" /></svg></ToolButton>
                <Separator $h={20} $m="0 4px" />
                <ToolButton $w={22} aria-label="Superscript"><svg width="13" height="14" fill="none"><path d="M1 6l6 7M7 6l-6 7" stroke="#777" strokeWidth="1.300" /><path d="M9 1h2.500v2L9 5.500h3" stroke="#c0605c" /></svg></ToolButton>
                <ToolButton $w={22} aria-label="Subscript"><svg width="13" height="14" fill="none"><path d="M1 1l5 6M6 1L1 7" stroke="#777" strokeWidth="1.300" /><path d="M9 8.500h2.500v2L9 13h3" stroke="#6467b8" /></svg></ToolButton>
                <ToolButton $w={20} aria-label="Hyperlink"><svg width="16" height="16"><circle cx="7" cy="6.500" r="6.500" fill="#7f8eb8" /><path d="M3 3c3-3 5-1 6 1S6 8 3 7z" fill="#b5c8da" /><g fill="none" stroke="#bda45c" strokeWidth="1.500"><rect x="4" y="10.500" width="6" height="4" rx="2" /><rect x="9" y="10.500" width="6" height="4" rx="2" /></g></svg></ToolButton>
                <Separator $h={20} $m="0 5px 0 4px" />
                <ToolButton $w={18} aria-label="Document"><svg width="14" height="16"><path d="M.5.5h9l4 4v11H.5z" fill="#f7faff" stroke="#9aacdf" /><path d="M2 4h6M2 6.500h9M2 9h9M2 11.500h5" stroke="#b5c2e6" /><path d="M8 14l2-4 2 4" stroke="#e0605c" fill="#e0605c" /></svg></ToolButton>
            </Toolbar>
        </Panel>
    </SideColumn>
);

const NewPackage = () => {
    const [name, setName] = useState('osqp_pkg');
    const [content, setContent] = useState(CONTENT[0]);

    return (
        <Overlay>
            <Dialog onSubmit={e => e.preventDefault()}>
                <DialogHead>New Package<button type="button" aria-label="Close dialog"><Cross color="#dbe2ea" size={8} w={1.300} /></button></DialogHead>
                <DialogBody>
                    <Field>
                        <label htmlFor="owner">Owner:</label>
                        <input id="owner" value="Model" readOnly />
                        <SquareButton type="button">...</SquareButton>
                    </Field>
                    <Field>
                        <label htmlFor="name">Name:</label>
                        <input id="name" value={name} onChange={e => setName(e.target.value)} />
                        <SquareButton type="button" aria-label="Edit name"><svg width="15" height="12"><path d="M.5.5h14v11H.5z" fill="#edcfb0" stroke="#94714a" /><path d="M4.500 3.500h6v5h-6zM5 6h5" fill="#fff" stroke="#7b95b5" /></svg></SquareButton>
                    </Field>
                    <Options>
                        <legend>Initial Content:</legend>
                        {CONTENT.map(c => (
                            <Option key={c}><input type="radio" name="content" checked={c === content} onChange={() => setContent(c)} />{c}</Option>
                        ))}
                    </Options>
                    <Actions>
                        <ActionButton $primary>OK</ActionButton>
                        <ActionButton type="button">Cancel</ActionButton>
                        <ActionButton type="button">Help</ActionButton>
                    </Actions>
                </DialogBody>
            </Dialog>
        </Overlay>
    );
};

const App = () => {
    const [tab, setTab] = useState('Start');

    return (
        <Shell>
            <GlobalStyle />
            <TopBar tab={tab} setTab={setTab} />
            <RibbonBar />
            <Address />
            <Workspace>
                <Browser />
                <Splitter />
                <Center />
                <Splitter />
                <Side />
            </Workspace>
            <StatusBar>
                All Perspectives
                <Separator $h={10} $m="0 0 0 26px" />
                <ZoomControl>
                    <svg width="9" height="9"><path d="M0 4.500h9" stroke="#aaa" strokeWidth="2" /></svg>
                    <input type="range" aria-label="Zoom" defaultValue="0" />
                    <svg width="9" height="9"><path d="M0 4.500h9M4.500 0v9" stroke="#aaa" strokeWidth="2" /></svg>
                </ZoomControl>
                <KeyState $gap={1}>CAP</KeyState>
                <KeyState $on>NUM</KeyState>
                <KeyState>SCRL</KeyState>
                <KeyState>CLOUD</KeyState>
                <Watermark>https://blog.csdn.net/qq_25022577</Watermark>
            </StatusBar>
            <NewPackage />
        </Shell>
    );
};

export default App;
